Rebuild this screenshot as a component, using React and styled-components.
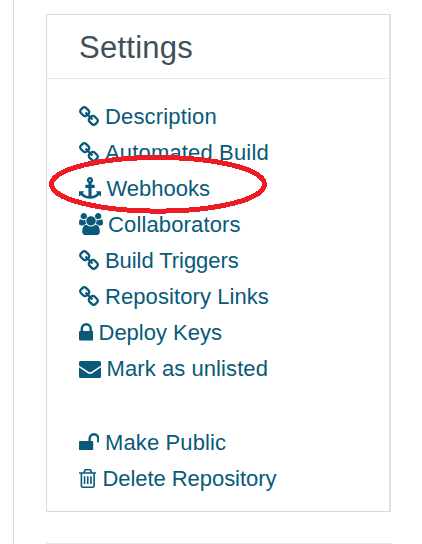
import React from "react";
import styled, { createGlobalStyle } from "styled-components";

const GlobalStyle = createGlobalStyle`
  * { box-sizing: border-box; }
  body { margin: 0; background: #fff; }
`;

const Page = styled.div`
  width: 422px;
  height: 544px;
  padding-left: 13px;
  overflow: hidden;
  font-family: "Liberation Sans", Arial, sans-serif;
`;

const Column = styled.main`
  height: 100%;
  border-left: 1px solid #d9d9dc;
  padding: 14px 31px 0 32px;
`;

const Card = styled.section`
  position: relative;
  width: 345px;
  height: 498px;
  border: 1px solid #d8d9dd;
  border-right: 2px solid #e2e2e4;
`;

const CardHeader = styled.header`
  height: 64px;
  padding: 0 32px;
  border-bottom: 1px solid #e9e9eb;
`;

const Title = styled.h2`
  margin: 0;
  font-size: 31px;
  font-weight: 400;
  line-height: 66px;
  letter-spacing: 0.25px;
  color: #3f5056;
  white-space: nowrap;
`;

const Menu = styled.nav`
  padding: 20px 0 0 31px;
`;

const Group = styled.ul`
  margin: 0 0 38px;
  padding: 0;
  list-style: none;
`;

const MenuItem = styled.li`
  height: 36px;
`;

const MenuLink = styled.a`
  display: flex;
  align-items: center;
  height: 36px;
  color: #085a78;
  text-decoration: none;
`;

const IconSlot = styled.span`
  display: flex;
  flex: none;
  width: ${(p) => p.$width}px;
  padding-left: 0.6px;
  padding-bottom: ${(p) => p.$lift}px;

  svg {
    display: block;
    fill: currentColor;
  }
`;

const Label = styled.span`
  font-size: 22px;
  line-height: 36px;
  letter-spacing: ${(p) => p.$tracking}px;
  white-space: nowrap;
`;

const Highlight = styled.svg`
  position: absolute;
  left: 0;
  top: 138px;
  overflow: visible;
  pointer-events: none;
`;

const NextCard = styled.section`
  width: 345px;
  height: 40px;
  margin-top: 31px;
  border-top: 1px solid #e6e6e8;
`;

const icons = {
  link: {
    box: "16 16 1632 1632", w: 20, h: 20, lift: 2.5,
    d: "M1456 1216q0-40-28-68l-208-208q-28-28-68-28-42 0-72 32 3 3 19 18.5t21.5 21.5 15 19 13 25.5 3.5 27.5q0 40-28 68t-68 28q-15 0-27.5-3.5t-25.5-13-19-15-21.5-21.5-18.5-19q-33 31-33 73 0 40 28 68l206 207q27 27 68 27 40 0 68-26l147-146q28-28 28-67zm-703-705q0-40-28-68l-206-207q-28-28-68-28-39 0-68 27l-147 146q-28 28-28 67 0 40 28 68l208 208q27 27 68 27 42 0 72-31-3-3-19-18.5t-21.5-21.5-15-19-13-25.5-3.5-27.5q0-40 28-68t68-28q15 0 27.5 3.5t25.5 13 19 15 21.5 21.5 18.5 19q33-31 33-73zm895 705q0 120-85 203l-147 146q-83 83-203 83-121 0-204-85l-206-207q-83-83-83-203 0-123 88-209l-88-88q-86 88-208 88-120 0-204-84l-208-208q-84-84-84-204t85-203l147-146q83-83 203-83 121 0 204 85l206 207q83 83 83 203 0 123-88 209l88 88q86-88 208-88 120 0 204 84l208 208q84 84 84 204z",
  },
  anchor: {
    box: "0 0 1792 1792", w: 22, h: 22, lift: 2,
    d: "M960 256q0-26-19-45t-45-19-45 19-19 45 19 45 45 19 45-19 19-45zm832 928v352q0 22-20 30-8 2-12 2-12 0-23-9l-93-93q-119 143-318.5 226.5t-429.5 83.5-429.5-83.5-318.5-226.5l-93 93q-9 9-23 9-4 0-12-2-20-8-20-30v-352q0-14 9-23t23-9h352q22 0 30 20 8 19-7 35l-100 100q67 91 189.5 153.5t271.5 82.5v-647h-192q-26 0-45-19t-19-45v-128q0-26 19-45t45-19h192v-163q-58-34-93-92.5t-35-128.5q0-106 75-181t181-75 181 75 75 181q0 70-35 128.5t-93 92.5v163h192q26 0 45 19t19 45v128q0 26-19 45t-45 19h-192v647q149-20 271.5-82.5t189.5-153.5l-100-100q-15-16-7-35 8-20 30-20h352q14 0 23 9t9 23z",
  },
  users: {
    box: "-64 0 1920 1792", w: 24, h: 22, lift: 2,
    d: "M529 896q-162 5-265 128h-134q-82 0-138-40.5t-56-118.5q0-353 124-353 6 0 43.5 21t97.5 42.5 119 21.5q67 0 133-23-5 37-5 66 0 139 81 256zm1071 637q0 120-73 189.5t-194 69.5h-874q-121 0-194-69.5t-73-189.5q0-53 3.5-103.5t14-109 26.5-108.5 43-97.5 62-81 85.5-53.5 111.5-20q10 0 43 21.5t73 48 107 48 135 21.5 135-21.5 107-48 73-48 43-21.5q61 0 111.5 20t85.5 53.5 62 81 43 97.5 26.5 108.5 14 109 3.5 103.5zm-1024-1277q0 106-75 181t-181 75-181-75-75-181 75-181 181-75 181 75 75 181zm704 384q0 159-112.5 271.5t-271.5 112.5-271.5-112.5-112.5-271.5 112.5-271.5 271.5-112.5 271.5 112.5 112.5 271.5zm576 225q0 78-56 118.5t-138 40.5h-134q-103-123-265-128 81-117 81-256 0-29-5-66 66 23 133 23 59 0 119-21.5t97.5-42.5 43.5-21q124 0 124 353zm-128-609q0 106-75 181t-181 75-181-75-75-181 75-181 181-75 181 75 75 181z",
  },
  lock: {
    box: "320 128 1152 1408", w: 14.5, h: 17.5, lift: 2.5,
    d: "M640 768h512v-192q0-106-75-181t-181-75-181 75-75 181v192zm832 96v576q0 40-28 68t-68 28h-960q-40 0-68-28t-28-68v-576q0-40 28-68t68-28h32v-192q0-184 132-316t316-132 316 132 132 316v192h32q40 0 68 28t28 68z",
  },
  envelope: {
    box: "0 0 22 17", w: 22, h: 17, lift: 0,
    d: "M1.5 0h19A1.5 1.5 0 0 1 22 1.5V4.6L13 10.6q-2 1.3-4 0L0 4.6V1.5A1.5 1.5 0 0 1 1.5 0zM0 6.3l8.3 5.6q2.7 1.7 5.4 0L22 6.3V15.5a1.5 1.5 0 0 1-1.5 1.5h-19A1.5 1.5 0 0 1 0 15.5z",
  },
  unlock: {
    box: "64 128 1664 1408", w: 20.5, h: 17.5, lift: 3,
    d: "M1728 576v256q0 26-19 45t-45 19h-64q-26 0-45-19t-19-45v-256q0-106-75-181t-181-75-181 75-75 181v192h96q40 0 68 28t28 68v576q0 40-28 68t-68 28h-960q-40 0-68-28t-28-68v-576q0-40 28-68t68-28h672v-192q0-185 131.5-316.5t316.5-131.5 316.5 131.5 131.5 316.5z",
  },
  trash: {
    box: "192 128 1408 1536", w: 17.5, h: 19, lift: 1.5,
    d: "M704 736v576q0 14-9 23t-23 9h-64q-14 0-23-9t-9-23v-576q0-14 9-23t23-9h64q14 0 23 9t9 23zm256 0v576q0 14-9 23t-23 9h-64q-14 0-23-9t-9-23v-576q0-14 9-23t23-9h64q14 0 23 9t9 23zm256 0v576q0 14-9 23t-23 9h-64q-14 0-23-9t-9-23v-576q0-14 9-23t23-9h64q14 0 23 9t9 23zm128 724v-948h-896v948q0 22 7 40.5t14.5 27 10.5 8.5h832q3 0 10.5-8.5t14.5-27 7-40.5zm-672-1076h448l-48-117q-7-9-17-11h-317q-10 2-17 11zm928 32v64q0 14-9 23t-23 9h-96v948q0 83-47 143.5t-113 60.5h-832q-66 0-113-58.5t-47-141.5v-952h-96q-14 0-23-9t-9-23v-64q0-14 9-23t23-9h309l70-167q15-37 54-63t79-26h320q40 0 79 26t54 63l70 167h309q14 0 23 9t9 23z",
  },
};

const primary = [
  { icon: "link", label: "Description", slot: 27, tracking: 0.16 },
  { icon: "link", label: "Automated Build", slot: 27, tracking: 0.16 },
  { icon: "anchor", label: "Webhooks", slot: 28.5, tracking: 0 },
  { icon: "users", label: "Collaborators", slot: 30, tracking: 0.14 },
  { icon: "link", label: "Build Triggers", slot: 27, tracking: -0.06 },
  { icon: "link", label: "Repository Links", slot: 27, tracking: 0.08 },
  { icon: "lock", label: "Deploy Keys", slot: 20.5, tracking: 0 },
  { icon: "envelope", label: "Mark as unlisted", slot: 28.5, tracking: 0.08 },
];

const danger = [
  { icon: "unlock", label: "Make Public", slot: 27, tracking: 0.12 },
  { icon: "trash", label: "Delete Repository", slot: 24.5, tracking: -0.06 },
];

function Icon({ name }) {
  const { box, w, h, d } = icons[name];
  return (
    <svg width={w} height={h} viewBox={box} preserveAspectRatio="none" aria-hidden="true">
      <path d={d} />
    </svg>
  );
}

function MenuGroup({ items }) {
  return (
    <Group>
      {items.map(({ icon, label, slot, tracking }) => (
        <MenuItem key={label}>
          <MenuLink>
            <IconSlot $width={slot} $lift={icons[icon].lift}>
              <Icon name={icon} />
            </IconSlot>
            <Label $tracking={tracking}>{label}</Label>
          </MenuLink>
        </MenuItem>
      ))}
    </Group>
  );
}

export default function App() {
  return (
    <Page>
      <GlobalStyle />
      <Column>
        <Card>
          <CardHeader>
            <Title>Settings</Title>
          </CardHeader>
          <Menu>
            <MenuGroup items={primary} />
            <MenuGroup items={danger} />
          </Menu>
          <Highlight width="222" height="64" aria-hidden="true">
            <ellipse cx="111" cy="31.3" rx="106.5" ry="26.8" fill="none" stroke="#ed1c24" strokeWidth="5" shapeRendering="crispEdges" />
          </Highlight>
        </Card>
        <NextCard />
      </Column>
    </Page>
  );
}
